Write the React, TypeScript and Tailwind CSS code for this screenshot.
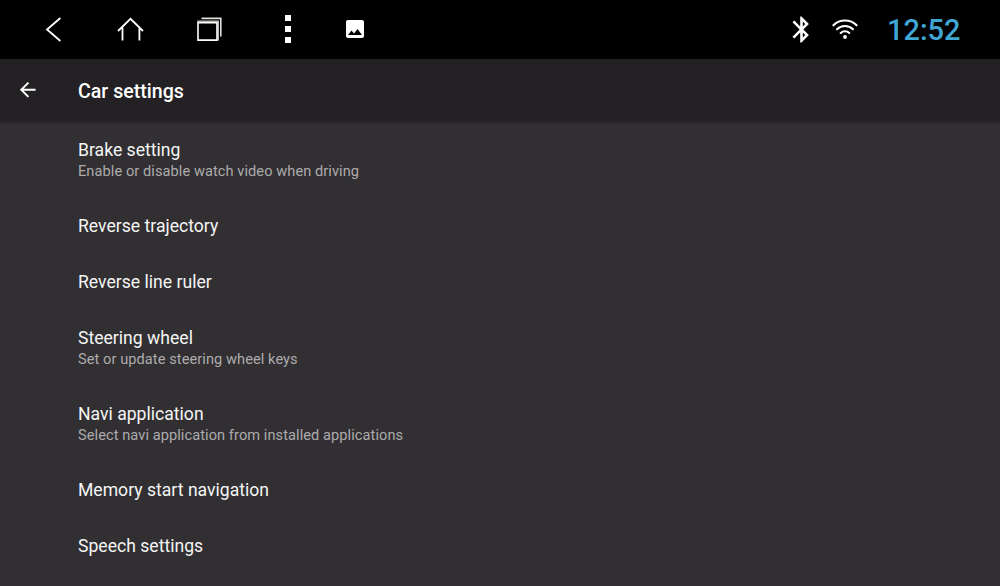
import * as React from "react"

type Setting = {
  id: string
  title: string
  summary?: string
}

const settings: Setting[] = [
  { id: 'brake', title: 'Brake setting', summary: 'Enable or disable watch video when driving' },
  { id: 'trajectory', title: 'Reverse trajectory' },
  { id: 'ruler', title: 'Reverse line ruler' },
  { id: 'wheel', title: 'Steering wheel', summary: 'Set or update steering wheel keys' },
  { id: 'navi', title: 'Navi application', summary: 'Select navi application from installed applications' },
  { id: 'memory', title: 'Memory start navigation' },
  { id: 'speech', title: 'Speech settings' },
]

// Navigation icons
const BackIcon = () => (
  <svg width="20" height="28" viewBox="0 0 20 28" fill="none" stroke="currentColor" strokeWidth="1.8">
    <path d="M17.4 3L4 14.5L17.4 26" />
  </svg>
)

const HomeIcon = () => (
  <svg width="30" height="28" viewBox="0 0 30 28" fill="none" stroke="currentColor" strokeWidth="1.8">
    <path d="M3 16L15.500 3.800L28 16M7.500 12V25.500M24.400 12V25.500" />
  </svg>
)

const RecentsIcon = () => (
  <svg width="28" height="28" viewBox="0 0 28 28" fill="none" stroke="currentColor" strokeWidth="1.6">
    <path d="M6.500 3.400H25.800V21.500" stroke="#dededa" />
    <path d="M2.200 6.300H23.200V25.500" stroke="#b9b9b5" />
    <path d="M3 7.700H22V25.100H3Z" />
  </svg>
)

const ImageIcon = () => (
  <svg width="24" height="24" viewBox="0 0 24 24" fill="currentColor">
    <path d="M21 19V5c0-1.100-.9-2-2-2H5c-1.100 0-2 .9-2 2v14c0 1.100.9 2 2 2h14c1.100 0 2-.9 2-2zM8.500 13.500l2.500 3.010L14.500 12l4.500 6H5l3.500-4.500z" />
  </svg>
)

// Status icons
const BluetoothIcon = () => (
  <svg width="31" height="31" viewBox="0 0 24 24" fill="currentColor">
    <path d="M17.710 7.710L12 2h-1v7.590L6.410 5 5 6.410 10.590 12 5 17.590 6.410 19 11 14.410V22h1l5.710-5.710-4.300-4.290 4.300-4.290zM13 5.830l1.880 1.880L13 9.590V5.830zm1.880 10.460L13 18.170v-3.760l1.880 1.880z" />
  </svg>
)

const WifiIcon = () => (
  <svg width="28" height="24" viewBox="0 0 28 24" fill="none" stroke="currentColor" strokeWidth="2.1" strokeLinecap="round">
    <path d="M2.400 8.300C8.800 1.900 19.200 1.900 25.600 8.300" />
    <path d="M6 12.200C10.400 7.900 17.600 7.900 22 12.200" />
    <path d="M9.700 16C12.100 13.700 15.900 13.700 18.300 16" />
    <circle cx="14" cy="20" r="1.900" fill="currentColor" stroke="none" />
  </svg>
)

const ArrowBackIcon = () => (
  <svg width="23.500" height="23.500" viewBox="0 0 24 24" fill="currentColor">
    <path d="M20 11H7.830l5.590-5.590L12 4l-8 8 8 8 1.410-1.410L7.830 13H20v-2z" />
  </svg>
)

const SettingRow = ({ title, summary }: Setting) => (
  <li className="pt-[17.3px] pb-[16.5px] pl-[78px]">
    <div className="text-[17.6px] leading-[22px] text-[#f5f5f5]">{title}</div>
    {summary && (
      <div className="pt-[0.8px] text-[14.6px] leading-[19.6px] tracking-[0.07px] text-[#adabad]">{summary}</div>
    )}
  </li>
)

export default function App() {
  return (
    <div className="flex h-[586px] w-[1000px] flex-col overflow-hidden bg-[#312f32] font-['Roboto',sans-serif]">

      {/* System bar */}
      <div className="flex h-[58.5px] shrink-0 items-center bg-black text-white">
        <nav className="flex items-center">
          <button className="ml-[43px]" aria-label="Back"><BackIcon /></button>
          <button className="ml-[52px]" aria-label="Home"><HomeIcon /></button>
          <button className="ml-[50px]" aria-label="Recent apps"><RecentsIcon /></button>
          <button className="ml-[62px] flex flex-col gap-[5px]" aria-label="More">
            <span className="block size-1.5 bg-white" />
            <span className="block size-1.5 bg-white" />
            <span className="block size-1.5 bg-white" />
          </button>
          <button className="ml-[51.5px]" aria-label="Gallery"><ImageIcon /></button>
        </nav>

        <div className="ml-auto flex items-center">
          <BluetoothIcon />
          <div className="ml-[14px]"><WifiIcon /></div>
          <span className="ml-[28px] w-[113px] pt-[3px] text-[29px] leading-none font-medium text-[#40a7d5]">12:52</span>
        </div>
      </div>

      {/* Title bar */}
      <header className="flex h-[63.5px] shrink-0 items-center bg-[#232124] text-white shadow-[0_1px_2px_rgba(0,0,0,0.25)]">
        <button className="mb-[1.5px] ml-[15.5px]" aria-label="Navigate up"><ArrowBackIcon /></button>
        <h1 className="ml-[39px] pt-[2px] text-[19.6px] font-medium">Car settings</h1>
      </header>

      {/* Settings list */}
      <ul className="flex-1">
        {settings.map((item) => (
          <SettingRow key={item.id} {...item} />
        ))}
      </ul>
    </div>
  )
}
